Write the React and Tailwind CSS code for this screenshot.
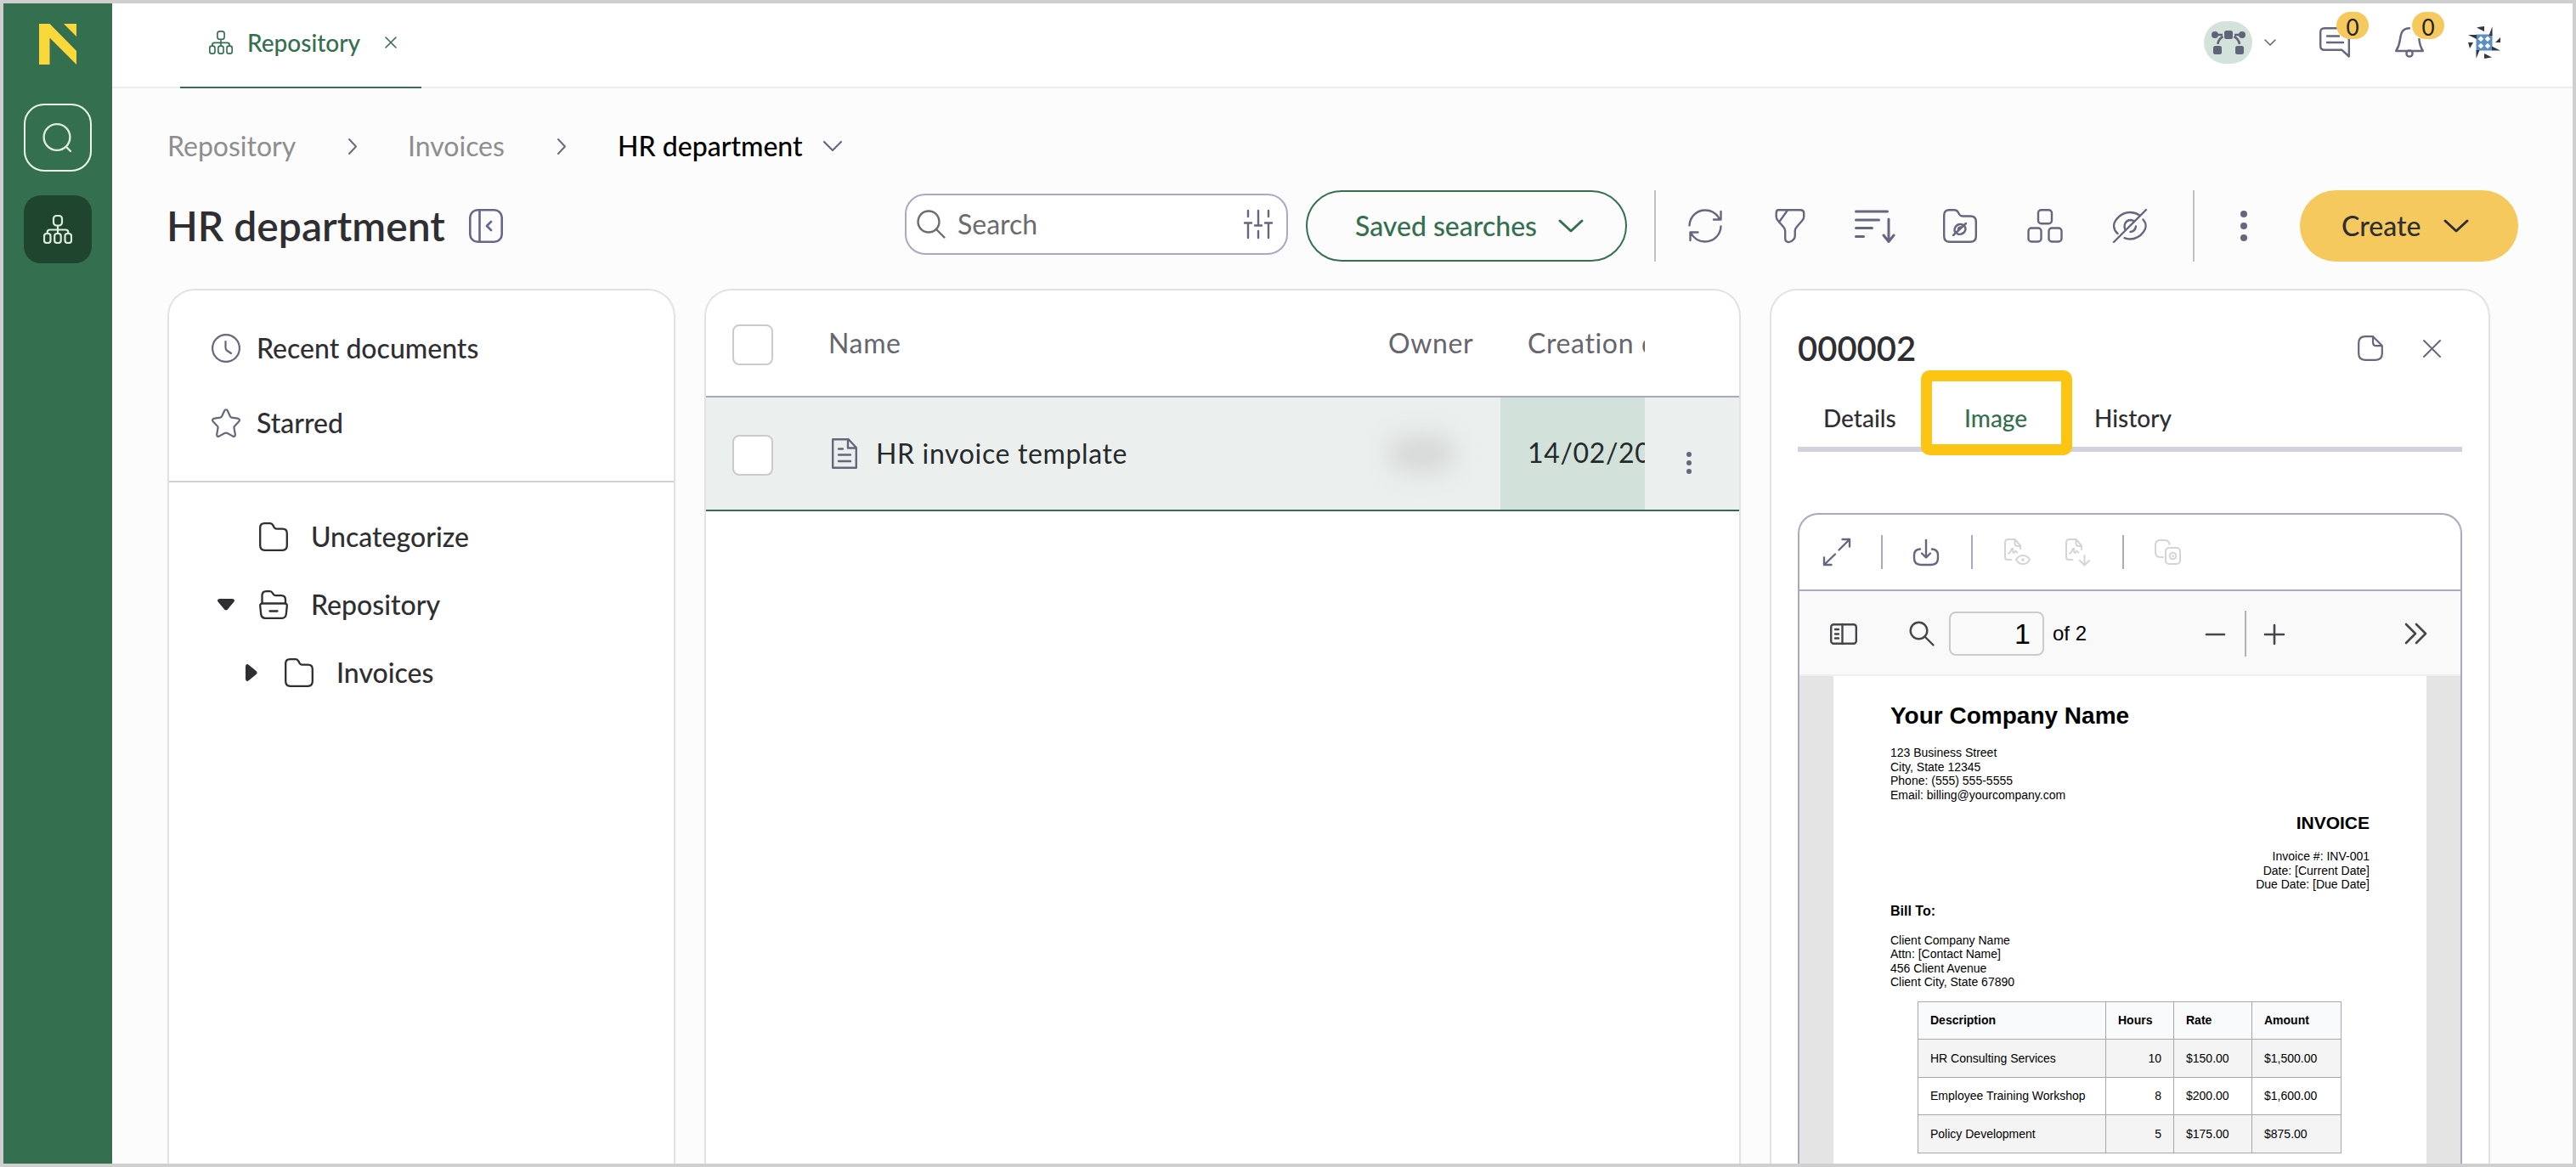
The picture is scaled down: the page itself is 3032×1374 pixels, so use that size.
import clsx from "clsx";

const Svg = ({ w, h, sw = 2, className, children }) => (
  <svg
    width={w}
    height={h}
    viewBox={`0 0 ${w} ${h}`}
    fill="none"
    stroke="currentColor"
    strokeWidth={sw}
    strokeLinecap="round"
    strokeLinejoin="round"
    className={clsx("shrink-0 overflow-visible", className)}
  >
    {children}
  </svg>
);

const TreeIcon = ({ w, h, sw, className }) => (
  <svg
    width={w}
    height={h}
    viewBox="0 0 34 34"
    fill="none"
    stroke="currentColor"
    strokeWidth={sw}
    className={clsx("shrink-0", className)}
  >
    <rect x="12" y="1" width="10" height="11.5" rx="3.5" />
    <rect x="1" y="22" width="7.5" height="11" rx="3" />
    <rect x="13.2" y="22" width="7.5" height="11" rx="3" />
    <rect x="25.5" y="22" width="7.5" height="11" rx="3" />
    <path d="M17 12.5V22M4.7 22v-1.5c0-2 1-3 3-3h18.6c2 0 3 1 3 3V22" />
  </svg>
);

const Chevron = ({ w, h, sw, className }) => (
  <Svg w={w} h={h} sw={sw} className={className}>
    <path d={`M1 1L${w / 2} ${h - 1}L${w - 1} 1`} />
  </Svg>
);

const ChevronRight = () => (
  <Svg w={10} h={19} className="text-[#6b6b80]">
    <path d="M1 1l8 8.500l-8 8.500" />
  </Svg>
);

const Close = ({ s, sw, className }) => (
  <Svg w={s} h={s} sw={sw} className={className}>
    <path d={`M1 1L${s - 1} ${s - 1}M${s - 1} 1L1 ${s - 1}`} />
  </Svg>
);

const Dots = ({ className }) => (
  <div className={clsx("flex flex-col", className)}>
    <i />
    <i />
    <i />
  </div>
);

const FolderIcon = () => (
  <Svg w={34} h={34} sw={2.3} className="text-[#2f2f33]">
    <path d="M1.200 27V6.500c0-3.500 1.800-5.300 5.300-5.300h6.500c1.800 0 2.500.6 3.300 2.200l1.400 2.600c.7 1.300 1.500 1.700 3 1.700h6.800c3.500 0 5.300 1.800 5.300 5.300V27c0 4-1.800 5.800-5.300 5.800h-21c-3.500 0-5.300-1.800-5.300-5.800z" />
  </Svg>
);

const DrawerIcon = () => (
  <Svg w={34} h={34} sw={2.3} className="text-[#2f2f33]">
    <path d="M3.500 15V6.500c0-3.500 1.500-5.300 5-5.300h4c1.800 0 2.500.6 3.300 2l.9 1.500c.8 1.300 1.500 1.500 3 1.500h6.300c3.300 0 5 1.700 5 5V15" />
    <path d="M4 15.500h26c2 0 3 1.200 2.800 3l-1 9.500c-.4 3.200-2 4.800-5 4.800H7.200c-3 0-4.600-1.600-5-4.800l-1-9.500c-.2-1.800.8-3 2.800-3zM12.500 24.500h9" />
  </Svg>
);

const Sidebar = () => (
  <aside className="flex w-[128px] shrink-0 flex-col items-center bg-[#34704f] pt-6">
    <svg width="44" height="48" viewBox="0 0 44 48" fill="#fad83c">
      <polygon points="0,0 12.500,0 44,32 44,48 12.500,16.500 12.500,48 0,48" />
      <polygon points="29,0 44,0 44,15" />
    </svg>
    <button className="mt-[46px] flex h-20 w-20 items-center justify-center rounded-[24px] border-2 border-[#eafbe6] text-[#dcebdc]">
      <Svg w={34} h={34} sw={2.4} className="-ml-0.5">
        <circle cx="17" cy="16.500" r="15.400" />
        <path d="M28 28l5 5" />
      </Svg>
    </button>
    <button className="mt-7 flex h-20 w-20 items-center justify-center rounded-[20px] bg-[#1f452e] text-[#dcebdc]">
      <TreeIcon w={34} h={34} sw={2.2} />
    </button>
  </aside>
);

const Badge = () => (
  <span className="absolute -top-[18px] left-5 flex h-8 w-[38px] items-center justify-center rounded-full bg-[#f6c95f] pt-1 text-[26px] text-[#222]">
    0
  </span>
);

const Header = () => (
  <header className="flex h-[100px] shrink-0 justify-between border-b-2 border-[#ededed] bg-white">
    <div className="-mb-0.5 ml-20 flex w-[284px] items-center border-b-2 border-[#3a6b57] pb-1.5 pl-[34px] text-[28px] font-medium text-[#34704f]">
      <TreeIcon w={28} h={28} sw={2} />
      <span className="ml-[17px] w-[162px]">Repository</span>
      <Close s={14} sw={1.6} />
    </div>
    <div className="flex items-center pr-[85px] pb-1.5 text-[#66667f]">
      <div className="flex h-[50px] w-[57px] items-center justify-center rounded-full bg-[#d3e2da] text-[#5f6478]">
        <svg width="40" height="30" viewBox="0 0 40 30" fill="currentColor">
          <rect x="15" y="1" width="10" height="10" rx="2.500" />
          <rect x="2" y="19" width="10" height="10" rx="2.500" />
          <rect x="28" y="19" width="10" height="10" rx="2.500" />
          <circle cx="4" cy="6" r="4" />
          <circle cx="36" cy="6" r="4" />
          <path
            d="M4 6h9M27 6h9M13.500 8Q8 11 7.500 17M26.500 8q5.500 3 6.500 9"
            fill="none"
            stroke="currentColor"
            strokeWidth="2.600"
          />
        </svg>
      </div>
      <Chevron w={14} h={8} sw={1.6} className="ml-3.5" />
      <div className="relative ml-[51px]">
        <Svg w={36} h={36} sw={2.4}>
          <path d="M20 1.200H6C2.800 1.200 1.200 2.800 1.200 6v16c0 3.200 1.600 4.800 4.800 4.800h20.500l8.300 7.700V14M9 10.500h14M9 18h19" />
        </Svg>
        <Badge />
      </div>
      <div className="relative ml-[53px]">
        <Svg w={34} h={36} sw={2.4}>
          <path d="M17 1.200C9 1.200 7 6.500 6 14c-.7 6-2 9.500-4.800 14h31.600C30 23.500 29 20 28.300 14" />
          <circle cx="17" cy="31" r="3.600" />
        </Svg>
        <Badge />
      </div>
      <svg width="38" height="38" viewBox="0 0 38 38" className="ml-[52px]">
        <rect x="9.500" y="9.500" width="19" height="19" fill="#5b8fc4" />
        <g fill="#fff">
          <path d="M15 11.500l3.300 3.300-3.300 3.300-3.300-3.300zM23 11.500l3.300 3.300-3.300 3.300-3.300-3.300zM15 19.700l3.300 3.300-3.300 3.300-3.300-3.300zM23 19.700l3.300 3.300-3.300 3.300-3.300-3.300z" />
        </g>
        <g fill="#33363b">
          <path d="M10 1.500Q15 0 19 0v6zM28.500 0v11h-4zM0 10h10v5zM38 13v6h-6zM38 28.500H28v-5zM0 19h6L2 26zM9.500 38V28h4zM19 32l9 4.500-9 1.500z" />
        </g>
      </svg>
    </div>
  </header>
);

const Breadcrumb = () => (
  <nav className="mt-12 flex h-10 shrink-0 items-center pl-[65px] text-[32px] text-[#8e8e8e]">
    <span className="w-[213px]">Repository</span>
    <ChevronRight />
    <span className="ml-[60px] w-[176px]">Invoices</span>
    <ChevronRight />
    <span className="ml-[61px] w-[242px] font-medium text-black">
      HR department
    </span>
    <Chevron w={22} h={12} sw={2.2} className="text-[#66667f]" />
  </nav>
);

const ActionIcons = () => (
  <div className="ml-[38px] flex gap-[60px] text-[#66667f]">
    <Svg w={40} h={40} sw={2.4}>
      <path d="M1.500 19.500C2 9 10 1.500 20 1.500c7.500 0 13.500 4 17 10.500M38.500 3v9.500H30M38.500 20.500C38 31 30 38.500 20 38.500c-7.500 0-13.500-4-17-10.500M2.500 37v-9.500h9" />
    </Svg>
    <Svg w={40} h={40} sw={2.4}>
      <path d="M6 1.200h26c2.800 0 4.200 1.300 4.200 3.700v4c0 2-.7 3.300-2 4.800l-6.500 7.500c-1.500 1.600-2 2.600-2 4.800v6c0 2-.6 3-2 4.300-3.500 4-9.500 4-9.500-2V26c0-2-.5-3-2-4.800l-6.500-7.500c-1.300-1.500-2-2.800-2-4.800v-4c0-2.400 1-3.700 2.300-3.700zM17 1.500L7 15.500" />
    </Svg>
    <Svg w={40} h={40} sw={3}>
      <path d="M-2.500 3h37M-2.500 13h27M-2.500 22.500h19M-2.500 32.500h9M36 12v26M30 31l6 7.500 6-7.500" />
    </Svg>
    <Svg w={40} h={40} sw={2.4}>
      <path d="M1.200 32V7.500c0-4 2-6.300 6-6.300h6c2.500 0 3.500.8 4.500 2.600l1.500 2.700c1 1.700 2 2 4 2H32c4.500 0 6.800 2.200 6.800 6.500V32c0 4.500-2.300 6.800-6.800 6.800H8C3.500 38.800 1.200 36.500 1.200 32z" />
      <path d="M12 31L27 17M14.500 27.500c-2-2-1-8.500 5-9.500 2-.3 3 .2 4 .8M25.500 20.500c2.200 3 .5 8-4.500 9.200-1.800.4-3 .2-4-.5M18 25.500c-.5-2 .8-3.500 2.500-4" />
    </Svg>
    <Svg w={40} h={40} sw={2.4}>
      <rect x="12" y="1.200" width="16" height="16" rx="3.500" />
      <rect x="0.500" y="22.500" width="15" height="16" rx="3.500" />
      <rect x="24.500" y="22.500" width="15" height="16" rx="3.500" />
    </Svg>
    <Svg w={40} h={40} sw={2.4}>
      <path d="M39 1L1 39M5.500 29C0 24 0 17.500 3.500 13 8 7 13.500 4 20 4c4 0 7.500 1 10.500 3M35.500 12.500c4 4.500 4 10 .5 14.500-4.500 6-10 8.500-16 8.500-2.500 0-4.500-.4-6.500-1.300M14.500 24.500C12 19 15 13.500 20 13c2 0 3 .3 4.500 1M27 20.500c-.5 4-2.500 6-6.500 6.500" />
    </Svg>
  </div>
);

const Toolbar = () => (
  <div className="mt-8 flex h-[84px] shrink-0 items-center pl-16">
    <h1 className="w-[356px] text-5xl font-semibold text-[#2f2f33]">
      HR department
    </h1>
    <Svg w={40} h={40} sw={2.6} className="text-[#66668a]">
      <rect x="1.300" y="1.300" width="37.400" height="37.400" rx="9" />
      <path d="M12.500 1.500v37M26 15l-5 5 5 5" />
    </Svg>
    <div className="mb-1 ml-[473px] flex h-[72px] w-[451px] items-center rounded-[24px] border-2 border-[#a9a9c4] bg-white pl-3 text-[#6b6b70]">
      <Svg w={33} h={34} sw={2.4}>
        <circle cx="14" cy="14" r="12.500" />
        <path d="M23 23l9.500 9.500" />
      </Svg>
      <span className="ml-[15px] w-[338px] text-[32px]">Search</span>
      <Svg w={32} h={34} sw={2.4} className="text-[#66667f]">
        <path d="M4 1v7M4 15.500V33M0 15.500h8M16 1v17.500M12 18.500h8M16 25v8M28 1v7M28 15.500V33M24 15.500h8" />
      </Svg>
    </div>
    <button className="ml-[21px] flex h-[84px] w-[378px] items-center rounded-full border-2 border-[#34704f] pl-14 text-[32px] font-medium text-[#34704f]">
      <span className="w-60 text-left">Saved searches</span>
      <Chevron w={28} h={14} sw={3} />
    </button>
    <div className="ml-8 h-[84px] w-0.5 bg-[#c2c2c4]" />
    <ActionIcons />
    <div className="ml-[54px] h-[84px] w-0.5 bg-[#c2c2c4]" />
    <Dots className="ml-[54px] gap-1.5 [&>i]:h-2 [&>i]:w-2 [&>i]:rounded-full [&>i]:bg-[#66667f]" />
    <button className="ml-[62px] flex h-[84px] w-[257px] items-center rounded-full bg-[#f6c95f] pl-[49px] text-[32px] font-medium text-[#2f2f33]">
      <span className="w-[121px] text-left">Create</span>
      <Chevron w={28} h={14} sw={3} />
    </button>
  </div>
);

const FolderPanel = () => (
  <section className="w-[598px] rounded-t-[32px] border-2 border-b-0 border-[#e2e2e2] bg-white text-[32px] font-medium text-[#2f2f33]">
    <div className="h-[226px] border-b-2 border-[#d2d2d4] pt-6">
      <div className="flex h-[88px] items-center gap-[19px] pl-[50px]">
        <Svg w={34} h={34} sw={2.2} className="text-[#66667f]">
          <circle cx="17" cy="17" r="15.900" />
          <path d="M16.500 9v7.500c0 2 .5 2.500 2 3.500l4.500 3" />
        </Svg>
        Recent documents
      </div>
      <div className="flex h-[88px] items-center gap-[19px] pl-[50px]">
        <Svg w={34} h={34} sw={2.2} className="text-[#66667f]">
          <path d="M15.200 2.500c.8-1.700 2.800-1.700 3.600 0l3 6.500c.5 1 1 1.400 2 1.600l6.700 1c2.500.4 3.200 2.200 1.500 4L27.300 20.500c-.7.800-1 1.500-.8 2.500l1.300 7.200c.3 2.200-1 3.200-3 2.200L18.500 29c-1-.5-2-.5-3 0l-6.300 3.400c-2 1-3.300 0-3-2.200L7.500 23c.2-1 0-1.700-.8-2.500L2 15.600c-1.700-1.800-1-3.600 1.500-4l6.700-1c1-.2 1.500-.6 2-1.600z" />
        </Svg>
        Starred
      </div>
    </div>
    <div className="pt-6">
      <div className="flex h-20 items-center gap-[27px] pl-[106px]">
        <FolderIcon />
        Uncategorize
      </div>
      <div className="flex h-20 items-center pl-[57px]">
        <svg width="20" height="14" viewBox="0 0 20 14" fill="#2f2f33">
          <path d="M3 0h14c2.800 0 4 2 2 4l-7.300 8.800c-1 1-2.400 1-3.400 0L1 4C-1 2 .2 0 3 0z" />
        </svg>
        <div className="ml-[29px] flex items-center gap-[27px]">
          <DrawerIcon />
          Repository
        </div>
      </div>
      <div className="flex h-20 items-center pl-[90px]">
        <svg width="14" height="20" viewBox="0 0 14 20" fill="#2f2f33">
          <path d="M0 3v14c0 2.800 2 4 4 2l8.800-7.300c1-1 1-2.400 0-3.400L4 1C2-1 0 .2 0 3z" />
        </svg>
        <div className="ml-8 flex items-center gap-[27px]">
          <FolderIcon />
          Invoices
        </div>
      </div>
    </div>
  </section>
);

const Checkbox = () => (
  <div className="mt-1 ml-[31px] h-12 w-12 rounded-lg border-2 border-[#cbcbcd] bg-white" />
);

const DocumentTable = () => (
  <section className="ml-[34px] w-[1220px] overflow-hidden rounded-t-[32px] border-2 border-b-0 border-[#e2e2e2] bg-white text-[32px] tracking-[0.02em]">
    <div className="grid h-[126px] grid-cols-[142px_660px_133px_170px_111px] items-center border-b-2 border-[#a6a9c4] text-[#66666f]">
      <Checkbox />
      <span className="pl-0.5">Name</span>
      <span className="pl-px">Owner</span>
      <span className="overflow-hidden pl-8 whitespace-nowrap">
        Creation date
      </span>
    </div>
    <div className="grid h-[134px] grid-cols-[142px_660px_133px_170px_111px] items-center border-b-2 border-[#3a6655] bg-[#ebf0ee] text-[#26292b]">
      <Checkbox />
      <div className="flex items-center pl-1.5">
        <Svg w={30} h={36} sw={2.4} className="text-[#66667f]">
          <path d="M1.200 1.200h18.500L28.800 11v23.800H1.200zM19 1.500v10h9.500M8 12.500h5M8 19.500h14M8 27h14" />
        </Svg>
        <span className="mb-px ml-[22px]">HR invoice template</span>
      </div>
      <div className="h-11 w-20 rounded-full bg-[#d6d8d8] blur-[14px]" />
      <div className="flex h-full items-center overflow-hidden bg-[#d2e1d9] pb-0.5 pl-8 whitespace-nowrap">
        14/02/2025
      </div>
      <Dots className="mt-[22px] ml-[49px] gap-1 [&>i]:h-1.5 [&>i]:w-1.5 [&>i]:rounded-full [&>i]:bg-[#66667f]" />
    </div>
  </section>
);

const ViewerToolbar = () => (
  <>
    <div className="flex h-[90px] items-center border-b-2 border-[#a9a9c0] pl-7 text-[#66667f]">
      <Svg w={32} h={32} sw={2.4}>
        <path d="M18.500 13.500L31 1M22.500 1H31v8.500M14 18.500L1 31M1 22.500V31h8.500" />
      </Svg>
      <div className="ml-9 h-10 w-0.5 bg-[#a9a9c0]" />
      <Svg w={30} h={30} sw={2.4} className="mt-0.5 ml-9">
        <path d="M15 0v20M10 15.500l5 5 5-5M8 10.500c-5 .3-7 3-7 7V21c0 5.500 2.500 8 8 8h12c5.500 0 8-2.500 8-8v-3.500c0-4-2-6.700-7-7" />
      </Svg>
      <div className="ml-[38px] h-10 w-0.5 bg-[#a9a9c0]" />
      <Svg w={31} h={32} sw={2} className="ml-[37px] text-[#d4d4da]">
        <path d="M8.500 25H4c-2 0-3-1-3-3V5c0-3 1.500-4 4-4h7.500l6.500 7.500V12M12.500 1v5c0 2 1 3 3 3H19M5 17.500c3 0 3-6 4.500-6s0 5.500 1.500 5.500 1-2 2.500-2 .5 1.500 2 1.500" />
        <path d="M14 25c2-3.500 4.500-5 8-5s6 1.500 8 5c-2 3.500-4.500 5-8 5s-6-1.500-8-5z" />
        <circle cx="22" cy="25" r="0.800" />
      </Svg>
      <Svg w={29} h={32} sw={2} className="ml-[41px] text-[#d4d4da]">
        <path d="M8.500 25H4c-2 0-3-1-3-3V5c0-3 1.500-4 4-4h7.500l6.500 7.500V13M12.500 1v5c0 2 1 3 3 3H19M5 17.500c3 0 3-6 4.500-6s0 5.500 1.500 5.500 1-2 2.500-2 .5 1.500 2 1.500M22.500 20v11M17 26l5.500 5.500L28 26" />
      </Svg>
      <div className="ml-[38px] h-10 w-0.5 bg-[#a9a9c0]" />
      <Svg w={31} h={30} sw={2} className="ml-9 text-[#d4d4da]">
        <path d="M10 21H7c-4 0-6-1.500-6-5.500V6.500C1 2.500 3 1 7 1h4.500c4 0 5.800 1.500 6 5" />
        <rect x="13" y="10" width="17" height="19" rx="4" />
        <circle cx="21.500" cy="19.500" r="3.800" />
        <circle cx="21.500" cy="19.500" r="0.500" />
      </Svg>
    </div>
    <div className="flex h-[100px] items-center border-b-2 border-[#efeff0] bg-[#f9f9f9] pt-1 pb-0.5 pl-9 font-['Liberation_Sans',sans-serif] text-[#46464a]">
      <Svg w={32} h={25} sw={2.4}>
        <rect x="1.200" y="1.200" width="29.600" height="22.600" rx="3" />
        <path d="M14.500 1v23M6 7h4M6 12.500h4M6 17.500h4" />
      </Svg>
      <Svg w={29} h={29} sw={2.4} className="ml-[62px]">
        <circle cx="10.500" cy="10.500" r="9.800" />
        <path d="M17.500 17.500l10 10" />
      </Svg>
      <div className="ml-[17px] flex h-[52px] w-[112px] items-center justify-end rounded-lg border-2 border-[#cbcbcd] bg-[#fafafa] pr-3.5 text-[34px] text-black">
        1
      </div>
      <span className="ml-2.5 w-[180px] text-2xl text-black">of 2</span>
      <Svg w={23} h={24} sw={2.6}>
        <path d="M1 13h21" />
      </Svg>
      <div className="ml-[23px] h-[54px] w-0.5 bg-[#b4b4b6]" />
      <Svg w={24} h={24} sw={2.6} className="ml-[21px]">
        <path d="M1 13h22M12 2v22" />
      </Svg>
      <Svg w={27} h={24} sw={2.6} className="ml-[141px]">
        <path d="M2 1l11 11L2 23M14 1l11 11-11 11" />
      </Svg>
    </div>
  </>
);

const lines = [
  ["HR Consulting Services", "10", "$150.00", "$1,500.00"],
  ["Employee Training Workshop", "8", "$200.00", "$1,600.00"],
  ["Policy Development", "5", "$175.00", "$875.00"],
];

const InvoicePage = () => (
  <div className="bg-[#e4e4e5] px-10">
    <div className="h-[700px] bg-white px-[67px] pt-[27px] font-['Liberation_Sans',sans-serif] text-sm leading-[16.5px] text-black">
      <h2 className="text-[28px] leading-10 font-bold">Your Company Name</h2>
      <p className="mt-[15px]">
        123 Business Street
        <br />
        City, State 12345
        <br />
        Phone: (555) 555-5555
        <br />
        Email: billing@yourcompany.com
      </p>
      <div className="text-right">
        <h3 className="mt-[13px] text-[21px] leading-6 font-bold">INVOICE</h3>
        <p className="mt-[19px]">
          Invoice #: INV-001
          <br />
          Date: [Current Date]
          <br />
          Due Date: [Due Date]
        </p>
      </div>
      <h4 className="mt-[13px] text-base leading-5 font-bold">Bill To:</h4>
      <p className="mt-4">
        Client Company Name
        <br />
        Attn: [Contact Name]
        <br />
        456 Client Avenue
        <br />
        Client City, State 67890
      </p>
      <table className="mt-3.5 ml-8 w-[499px] table-fixed border-collapse [&_td]:border [&_td]:border-[#a8a8a8] [&_td]:px-3.5 [&_th]:border [&_th]:border-[#a8a8a8] [&_th]:px-3.5">
        <thead>
          <tr className="h-[44.6px] bg-[#f9fafb] text-left">
            <th className="w-[221px]">Description</th>
            <th className="w-20">Hours</th>
            <th className="w-[92px]">Rate</th>
            <th>Amount</th>
          </tr>
        </thead>
        <tbody>
          {lines.map(([name, hours, rate, amount]) => (
            <tr key={name} className="h-[44.6px] odd:bg-[#f4f4f4]">
              <td className="whitespace-nowrap">{name}</td>
              <td className="text-right">{hours}</td>
              <td>{rate}</td>
              <td>{amount}</td>
            </tr>
          ))}
        </tbody>
      </table>
    </div>
  </div>
);

const DetailPanel = () => (
  <section className="ml-[34px] w-[848px] rounded-t-[32px] border-2 border-b-0 border-[#e2e2e2] bg-white px-[31px] pt-[38px]">
    <div className="flex h-[60px] items-center text-[#66667f]">
      <h2 className="w-[659px] text-[40px] font-semibold text-[#2f2f33]">
        000002
      </h2>
      <Svg w={30} h={30} sw={2.2}>
        <path d="M18 1.200H9C3.500 1.200 1.200 3.500 1.200 9v12c0 5.500 2.300 7.800 7.800 7.800h12c5.500 0 7.800-2.300 7.800-7.800v-9zM18 1.200V8c0 3 1 4.200 4 4.200h6.800" />
      </Svg>
      <Close s={21} sw={2} className="ml-[47px]" />
    </div>
    <div className="flex h-[92px] items-center border-b-[6px] border-[#d0d2de] pt-[18px] pl-[30px] text-[28px] font-medium text-[#2f2f33]">
      <span className="w-[166px]">Details</span>
      <div className="relative w-[153px] text-[#34704f]">
        Image
        <div className="absolute top-[-35px] left-[-51px] h-[100px] w-[178px] rounded-[10px] border-[13px] border-[#fdc513]" />
      </div>
      <span>History</span>
    </div>
    <div className="mt-[72px] overflow-hidden rounded-t-[24px] border-2 border-b-0 border-[#a9a9c0]">
      <ViewerToolbar />
      <InvoicePage />
    </div>
  </section>
);

const App = () => {
  return (
    <div className="flex h-[1374px] w-[3032px] overflow-hidden border-4 border-[#cfcfcf] bg-[#fcfcfc] font-[Lato,sans-serif]">
      <Sidebar />
      <main className="flex min-w-0 flex-1 flex-col overflow-hidden">
        <Header />
        <Breadcrumb />
        <Toolbar />
        <div className="mt-8 flex h-[1030px] shrink-0 pl-[65px]">
          <FolderPanel />
          <DocumentTable />
          <DetailPanel />
        </div>
      </main>
    </div>
  );
};

export default App;
